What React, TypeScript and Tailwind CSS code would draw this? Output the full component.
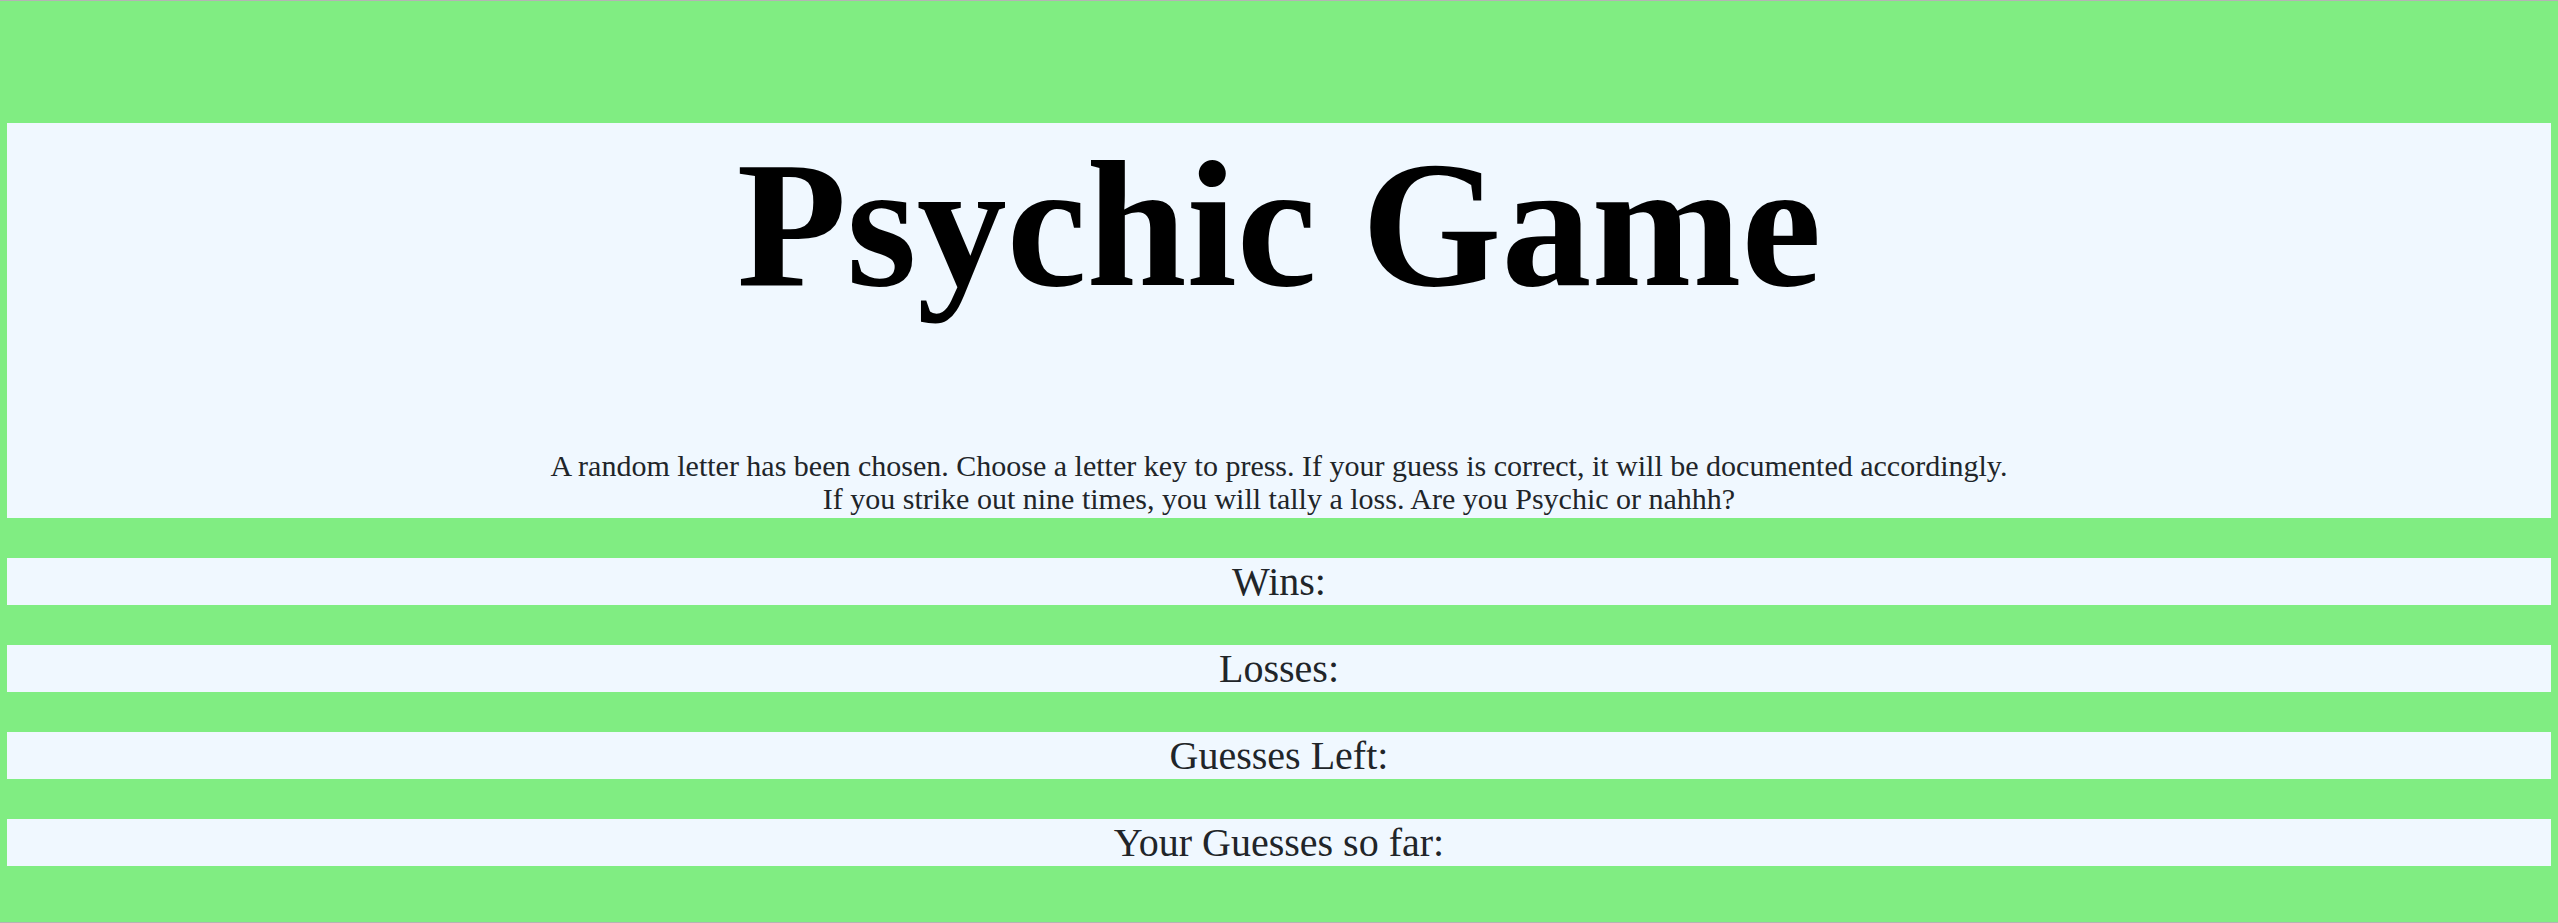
export default function App() {
    const stats = ['Wins:', 'Losses:', 'Guesses Left:', 'Your Guesses so far:'];

    return (
        <div
            className="min-h-[923px] bg-[#80ed82] border-y border-[#b4b4b4] pt-[122px] pb-[56px] flex flex-col gap-10"
            style={{ fontFamily: '"Liberation Serif", "Times New Roman", serif' }}
        >
            <div className="mx-[7px] h-[395px] bg-[#f0f8ff] flex flex-col items-center pt-[12px]">
                <h1 className="text-[180px] leading-[180px] font-bold text-black">Psychic Game</h1>
                <p className="mt-[134px] text-[30px] leading-[33px] text-[#212529] text-center">
                    A random letter has been chosen. Choose a letter key to press. If your guess is correct, it will be documented accordingly.
                    <br />
                    If you strike out nine times, you will tally a loss. Are you Psychic or nahhh?
                </p>
            </div>

            {stats.map((label) => (
                <div
                    key={label}
                    className="mx-[7px] h-[47px] bg-[#f0f8ff] text-center text-[40px] leading-[47px] text-[#212529]"
                >
                    {label}
                </div>
            ))}
        </div>
    )
}
